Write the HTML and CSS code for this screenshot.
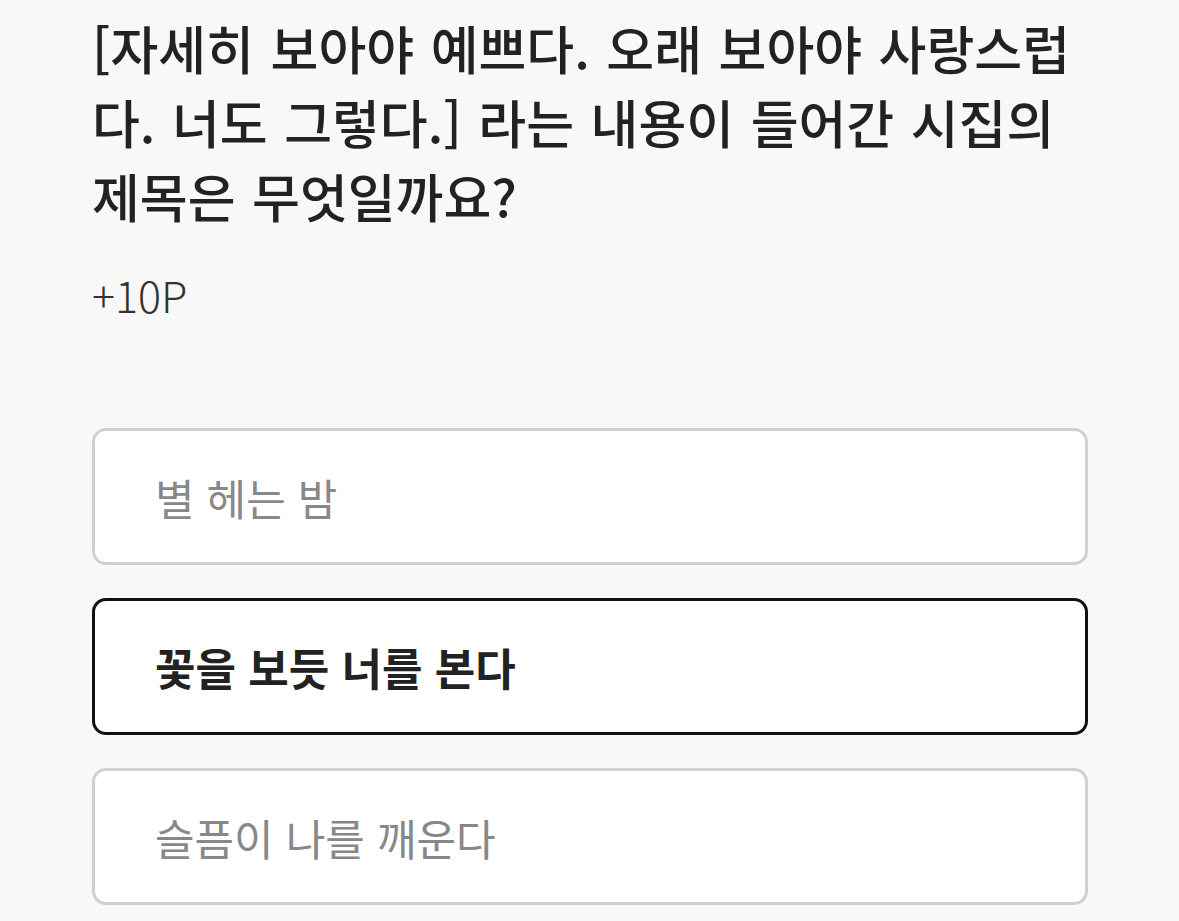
FILE: index.html
```html
<!DOCTYPE html>
<html lang="ko">
<head>
<meta charset="utf-8">
<link rel="stylesheet" href="styles.css">
</head>
<body>
<main class="quiz">
  <h1 class="question">[자세히 보아야 예쁘다. 오래 보아야 사랑스럽다. 너도 그렇다.] 라는 내용이 들어간 시집의 제목은 무엇일까요?</h1>
  <p class="points">+10P</p>
  <ul class="options">
    <li class="option">별 헤는 밤</li>
    <li class="option selected">꽃을 보듯 너를 본다</li>
    <li class="option">슬픔이 나를 깨운다</li>
  </ul>
</main>
</body>
</html>
```
FILE: styles.css
```css
html, body {
  margin: 0;
  padding: 0;
  background: #f8f8f8;
}
body {
  font-family: "Noto Sans CJK KR", "Noto Sans", sans-serif;
  color: #222;
}
.quiz {
  width: 996px;
  margin-left: 92px;
  padding-top: 11px;
}
.question {
  margin: 0;
  font-size: 52px;
  font-weight: 500;
  line-height: 74px;
  letter-spacing: 0;
  word-spacing: 2px;
  color: #222;
}
.points {
  margin: 37px 0 0;
  font-size: 43px;
  font-weight: 300;
  line-height: 48px;
  color: #333;
}
.options {
  list-style: none;
  margin: 110px 0 0;
  padding: 0;
  display: flex;
  flex-direction: column;
  gap: 33px;
}
.option {
  box-sizing: border-box;
  height: 137px;
  display: flex;
  align-items: center;
  padding-left: 60px;
  background: #fff;
  border: 3px solid #d0d0d0;
  border-radius: 14px;
  font-size: 43px;
  font-weight: 400;
  color: #888;
}
.option.selected {
  border-color: #111;
  color: #222;
  font-size: 44px;
  font-weight: 700;
}
```
